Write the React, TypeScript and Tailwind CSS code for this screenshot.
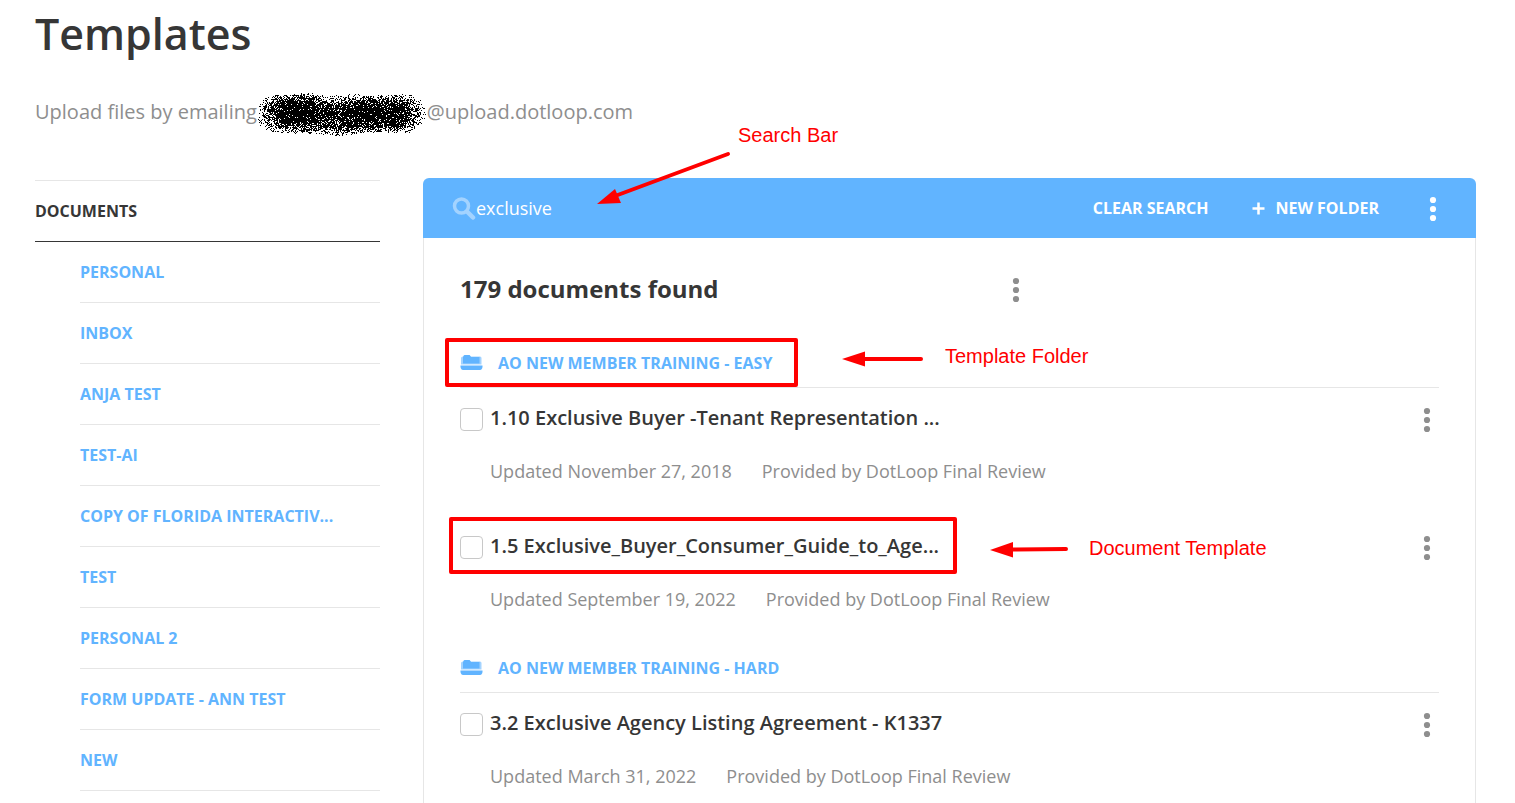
// App.tsx
// Templates page: folder list on the left, search results on the right

import type { ReactNode } from "react";

type DocumentItem = {
  id: string;
  title: string;
  updated: string;
  provider: string;
  callout?: ReactNode;
};

type FolderGroup = {
  id: string;
  name: string;
  documents: DocumentItem[];
  callout?: ReactNode;
};

const SIDEBAR_FOLDERS = [
  "PERSONAL",
  "INBOX",
  "ANJA TEST",
  "TEST-AI",
  "COPY OF FLORIDA INTERACTIV...",
  "TEST",
  "PERSONAL 2",
  "FORM UPDATE - ANN TEST",
  "NEW",
];

const GROUPS: FolderGroup[] = [
  {
    id: "easy",
    name: "AO NEW MEMBER TRAINING - EASY",
    callout: <FolderCallout />,
    documents: [
      {
        id: "1-10",
        title: "1.10 Exclusive Buyer -Tenant Representation ...",
        updated: "November 27, 2018",
        provider: "DotLoop Final Review",
      },
      {
        id: "1-5",
        title: "1.5 Exclusive_Buyer_Consumer_Guide_to_Age...",
        updated: "September 19, 2022",
        provider: "DotLoop Final Review",
        callout: <DocumentCallout />,
      },
    ],
  },
  {
    id: "hard",
    name: "AO NEW MEMBER TRAINING - HARD",
    documents: [
      {
        id: "3-2",
        title: "3.2 Exclusive Agency Listing Agreement - K1337",
        updated: "March 31, 2022",
        provider: "DotLoop Final Review",
      },
    ],
  },
];

const CALLOUT_TEXT =
  "pointer-events-none absolute whitespace-nowrap font-['Liberation_Sans',Arial,sans-serif] text-xl leading-6 text-[#ff0000]";

// Spray brush over the private part of the address, seeded so it never changes
function buildSprayPath() {
  let seed = 7;
  const random = () => {
    seed = (seed * 1664525 + 1013904223) % 4294967296;
    return seed / 4294967296;
  };
  const strokes = [
    { from: [17, 20], to: [60, 18], count: 2100 },
    { from: [17, 24], to: [80, 26], count: 1800 },
    { from: [60, 21], to: [110, 19], count: 1000 },
    { from: [78, 28], to: [110, 23], count: 1100 },
    { from: [105, 21], to: [154, 19], count: 1500 },
    { from: [110, 24], to: [154, 24], count: 1300 },
  ];
  const dots = new Set<string>();
  for (const { from, to, count } of strokes) {
    for (let i = 0; i < count; i++) {
      const t = random();
      const angle = random() * Math.PI * 2;
      const radius = 17 * Math.pow(random(), 0.55);
      const x = from[0] + (to[0] - from[0]) * t + Math.cos(angle) * radius;
      const y = from[1] + (to[1] - from[1]) * t + Math.sin(angle) * radius;
      dots.add(`M${Math.floor(x)} ${Math.floor(y)}h1v1h-1z`);
    }
  }
  return [...dots].join("");
}

const SPRAY_PATH = buildSprayPath();

function KebabIcon() {
  return (
    <svg width="8" height="26" viewBox="0 0 8 26" fill="currentColor" aria-hidden="true">
      <circle cx="4" cy="4" r="3.1" />
      <circle cx="4" cy="13" r="3.1" />
      <circle cx="4" cy="22" r="3.1" />
    </svg>
  );
}

function KebabButton({ label, className }: { label: string; className: string }) {
  return (
    <button
      type="button"
      aria-label={label}
      className={`flex w-6 shrink-0 items-center justify-center pt-0.5 ${className}`}
    >
      <KebabIcon />
    </button>
  );
}

function SearchIcon() {
  return (
    <svg width="24" height="24" viewBox="0 0 24 24" fill="none" stroke="#a3d3ff" aria-hidden="true">
      <circle cx="9.5" cy="10" r="7" strokeWidth="3.5" />
      <path d="M15.5 16L21 21.5" strokeWidth="4.5" strokeLinecap="round" />
    </svg>
  );
}

function FolderIcon() {
  return (
    <svg width="23" height="16" viewBox="0 0 23 16" aria-hidden="true">
      <path
        d="M1 9.5V3Q1 1.5 3 1.5L4 0H9.5L11 1.5H20Q21.5 1.5 21.5 3V9.5Z"
        fill="#a3d3ff"
      />
      <path d="M3 8.5V2L4.5 0H9.5L11 2H19.5V8.5Z" fill="#61b4ff" />
      <path d="M0.5 10.5H22.5V12Q22 15 20 15H3Q1 15 0.5 12Z" fill="#61b4ff" />
    </svg>
  );
}

function SearchCallout() {
  return (
    <>
      <span className={`${CALLOUT_TEXT} -top-[55px] left-[315px]`}>Search Bar</span>
      <svg
        className="pointer-events-none absolute -top-7 left-[172px]"
        width="138"
        height="56"
        viewBox="0 0 138 56"
        fill="#ff0000"
        aria-hidden="true"
      >
        <path d="M133 4L20 46" stroke="#ff0000" strokeWidth="4" strokeLinecap="round" />
        <path d="M2 54L20 39L26 53Z" />
      </svg>
    </>
  );
}

function FolderCallout() {
  return (
    <>
      <span className="pointer-events-none absolute -top-px -left-[15px] h-[49px] w-[353px] rounded-xs border-4 border-[#ff0000]" />
      <svg
        className="pointer-events-none absolute top-2.5 left-[382px]"
        width="84"
        height="20"
        viewBox="0 0 84 20"
        fill="#ff0000"
        aria-hidden="true"
      >
        <path d="M20 10H79" stroke="#ff0000" strokeWidth="4" strokeLinecap="round" />
        <path d="M0 10L23 2.5V17.5Z" />
      </svg>
      <span className={`${CALLOUT_TEXT} top-[5px] left-[485px]`}>Template Folder</span>
    </>
  );
}

function DocumentCallout() {
  return (
    <>
      <span className="pointer-events-none absolute top-px -left-[11px] h-[57px] w-[508px] rounded-xs border-4 border-[#ff0000]" />
      <svg
        className="pointer-events-none absolute top-6 left-[530px]"
        width="84"
        height="20"
        viewBox="0 0 84 20"
        fill="#ff0000"
        aria-hidden="true"
      >
        <path d="M20 9.5L76 9" stroke="#ff0000" strokeWidth="4" strokeLinecap="round" />
        <path d="M0 10L23 2V17.5Z" />
      </svg>
      <span className={`${CALLOUT_TEXT} top-5 left-[629px]`}>Document Template</span>
    </>
  );
}

function Sidebar() {
  return (
    <nav aria-label="Documents" className="mt-0.5 w-[345px] shrink-0 border-t border-[#e6e6e6]">
      <a
        href="#documents"
        className="flex h-[61px] items-center border-b border-[#363636] text-base font-bold text-[#363636]"
      >
        DOCUMENTS
      </a>
      <ul className="pl-[45px]">
        {SIDEBAR_FOLDERS.map((name) => (
          <li key={name} className="border-b border-[#e6e6e6]">
            <a href="#folder" className="flex h-15 items-center text-base font-bold text-[#61b4ff]">
              {name}
            </a>
          </li>
        ))}
      </ul>
    </nav>
  );
}

function DocumentRow({ item }: { item: DocumentItem }) {
  return (
    <li className="relative pt-4">
      <div className="flex h-[30px] items-center">
        <input
          id={`doc-${item.id}`}
          type="checkbox"
          className="size-[23px] shrink-0 appearance-none rounded border border-[#c8c8c8] bg-white checked:bg-[#61b4ff]"
        />
        <label
          htmlFor={`doc-${item.id}`}
          className="ml-[7px] flex-1 pb-0.5 text-xl leading-7 font-semibold text-[#363636]"
        >
          {item.title}
        </label>
        <KebabButton label={`Options for ${item.title}`} className="text-[#8e8e8e]" />
      </div>
      <p className="mt-6 flex gap-[30px] pl-[30px] text-lg leading-[26px] text-[#8e8e8e]">
        <span>Updated {item.updated}</span>
        <span>Provided by {item.provider}</span>
      </p>
      {item.callout}
    </li>
  );
}

function SearchHeader() {
  return (
    <div className="relative flex h-15 items-center rounded-t-md bg-[#61b4ff] pr-[31px] pl-[29px] text-white">
      <label htmlFor="template-search" aria-label="Search templates">
        <SearchIcon />
      </label>
      <input
        id="template-search"
        type="text"
        defaultValue="exclusive"
        className="min-w-0 flex-1 bg-transparent text-lg outline-none"
      />
      <button type="button" className="text-base font-bold">
        CLEAR SEARCH
      </button>
      <button type="button" className="ml-11 flex items-center gap-2.5 text-base font-bold">
        <svg width="13" height="13" viewBox="0 0 13 13" stroke="currentColor" aria-hidden="true">
          <path d="M6.5 0.5V12.5M0.5 6.5H12.5" strokeWidth="2.5" />
        </svg>
        NEW FOLDER
      </button>
      <KebabButton label="More actions" className="ml-[42px] text-white" />
      <SearchCallout />
    </div>
  );
}

export default function App() {
  return (
    <main className="flex min-h-screen flex-col bg-white pr-[39px] pl-[35px] font-['Open_Sans','Noto_Sans',sans-serif]">
      <h1 className="pt-1 text-[43px] leading-[60px] font-semibold text-[#363636]">Templates</h1>
      <p className="mt-7 flex h-11 items-center text-xl text-[#8e8e8e]">
        <span className="pb-1">Upload files by emailing</span>
        <svg
          className="shrink-0"
          width="170"
          height="44"
          viewBox="0 0 170 44"
          shapeRendering="crispEdges"
          role="img"
          aria-label="hidden address"
        >
          <path d={SPRAY_PATH} fill="#000000" />
        </svg>
        <span className="pb-1">@upload.dotloop.com</span>
      </p>

      <div className="mt-[42px] flex flex-1 gap-[43px]">
        <Sidebar />

        <section className="flex min-w-0 flex-1 flex-col">
          <SearchHeader />

          <div className="flex-1 border-x border-[#e6e6e6] px-9">
            <div className="flex w-[58%] items-center justify-between pt-[33px] pb-8">
              <h2 className="text-2xl leading-9 font-bold text-[#363636]">179 documents found</h2>
              <KebabButton label="Result options" className="text-[#8e8e8e]" />
            </div>

            <div className="flex flex-col gap-8">
              {GROUPS.map((group) => (
                <section key={group.id}>
                  <h3 className="relative border-b border-[#e6e6e6]">
                    <a
                      href="#folder"
                      className="flex h-12 items-center gap-[15px] text-base font-bold text-[#61b4ff]"
                    >
                      <FolderIcon />
                      {group.name}
                    </a>
                    {group.callout}
                  </h3>
                  <ul className="flex flex-col gap-8">
                    {group.documents.map((item) => (
                      <DocumentRow key={item.id} item={item} />
                    ))}
                  </ul>
                </section>
              ))}
            </div>
          </div>
        </section>
      </div>
    </main>
  );
}
